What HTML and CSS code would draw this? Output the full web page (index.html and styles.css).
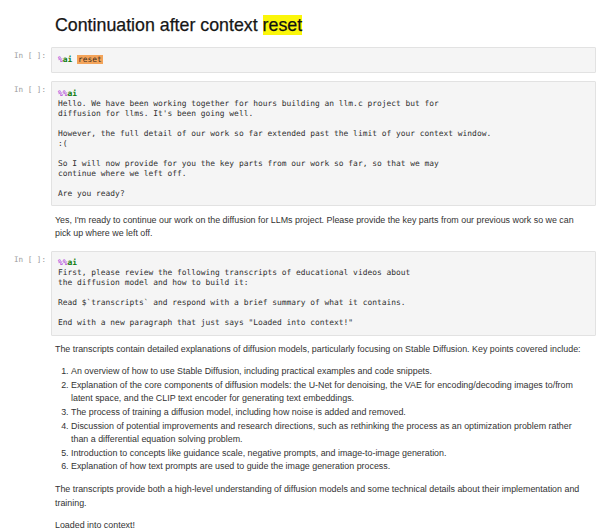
FILE: index.html
```html
<!DOCTYPE html>
<html>
<head>
<meta charset="utf-8">
<link rel="stylesheet" href="styles.css">
</head>
<body>
<div class="notebook">
  <div class="row">
    <div class="prompt"></div>
    <h1 class="title">Continuation after context <mark class="hl-yellow">reset</mark></h1>
  </div>

  <div class="row cell-row">
    <div class="prompt">In [ ]:</div>
    <div class="cell"><pre class="code code-one"><span class="magic">%</span><span class="kw">ai</span> <span class="hl-orange">reset</span></pre></div>
  </div>

  <div class="row cell-row">
    <div class="prompt">In [ ]:</div>
    <div class="cell"><pre class="code"><span class="magic">%%</span><span class="kw">ai</span>
Hello. We have been working together for hours building an llm.c project but for
diffusion for llms. It's been going well.

However, the full detail of our work so far extended past the limit of your context window.
:(

So I will now provide for you the key parts from our work so far, so that we may
continue where we left off.

Are you ready?</pre></div>
  </div>

  <div class="row">
    <div class="prompt"></div>
    <div class="output">
      <p>Yes, I'm ready to continue our work on the diffusion for LLMs project. Please provide the key parts from our previous work so we can pick up where we left off.</p>
    </div>
  </div>

  <div class="row cell-row">
    <div class="prompt">In [ ]:</div>
    <div class="cell"><pre class="code"><span class="magic">%%</span><span class="kw">ai</span>
First, please review the following transcripts of educational videos about
the diffusion model and how to build it:

Read $`transcripts` and respond with a brief summary of what it contains.

End with a new paragraph that just says "Loaded into context!"</pre></div>
  </div>

  <div class="row">
    <div class="prompt"></div>
    <div class="output">
      <p>The transcripts contain detailed explanations of diffusion models, particularly focusing on Stable Diffusion. Key points covered include:</p>
      <ol>
        <li>An overview of how to use Stable Diffusion, including practical examples and code snippets.</li>
        <li>Explanation of the core components of diffusion models: the U-Net for denoising, the VAE for encoding/decoding images to/from latent space, and the CLIP text encoder for generating text embeddings.</li>
        <li>The process of training a diffusion model, including how noise is added and removed.</li>
        <li>Discussion of potential improvements and research directions, such as rethinking the process as an optimization problem rather than a differential equation solving problem.</li>
        <li>Introduction to concepts like guidance scale, negative prompts, and image-to-image generation.</li>
        <li>Explanation of how text prompts are used to guide the image generation process.</li>
      </ol>
      <p>The transcripts provide both a high-level understanding of diffusion models and some technical details about their implementation and training.</p>
      <p>Loaded into context!</p>
    </div>
  </div>
</div>
</body>
</html>
```

FILE: styles.css
```css
html, body {
  margin: 0;
  padding: 0;
  background: #ffffff;
}

.notebook {
  padding: 15px 4px 0 0;
  font-family: "Liberation Sans", Arial, sans-serif;
  color: #2b2b2b;
}

.row {
  display: flex;
  align-items: flex-start;
}

.cell-row {
  margin-top: 8px;
}

.prompt {
  flex: 0 0 51px;
  box-sizing: border-box;
  padding-right: 5px;
  padding-top: 4px;
  text-align: right;
  font-family: "DejaVu Sans Mono", monospace;
  font-size: 7.6px;
  line-height: 10px;
  color: #9a9a9a;
}

.title {
  margin: 0 0 4px 4px;
  font-size: 17.8px;
  font-weight: normal;
  line-height: 20px;
  color: #161616;
  -webkit-text-stroke: 0.25px #161616;
}

.hl-yellow {
  background: #fbf60a;
  color: #111;
  padding: 0;
}

.cell {
  flex: 1;
  min-width: 0;
  background: #f5f5f5;
  border: 1px solid #e2e2e2;
  border-radius: 1px;
  padding: 6.5px 6px;
}

.code {
  margin: 0;
  font-family: "DejaVu Sans Mono", monospace;
  font-size: 7.92px;
  line-height: 10px;
  color: #2f2f2f;
  white-space: pre;
}

.code-one {
  padding: 0.5px 0;
}

.magic {
  color: #a625d6;
}

.kw {
  color: #0a7a0a;
  font-weight: bold;
}

.hl-orange {
  background: #f4a45a;
  color: #3a2a1a;
  padding: 0 1px;
}

.output {
  flex: 1;
  min-width: 0;
  padding: 7.5px 6px 2px 4px;
  font-size: 8.88px;
  line-height: 13.6px;
  color: #333;
}

.output p {
  margin: 0 0 8.5px 0;
}

.output p:last-child {
  margin-bottom: 0;
}

.output ol {
  margin: 0 0 9px 0;
  padding-left: 16px;
}
```
